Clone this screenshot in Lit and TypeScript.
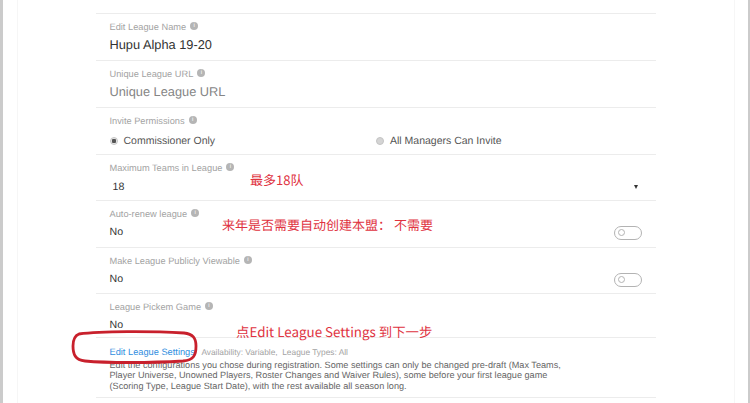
import { LitElement, html, css, nothing } from "lit";
import { customElement } from "lit/decorators.js";

const info = html`<span class="info">i</span>`;

@customElement("app-root")
export class AppRoot extends LitElement {
  static styles = css`
    :host { display: block; width: 750px; height: 403px; overflow: hidden; background: #fff; position: relative;
      font-family: "Liberation Sans", Arial, sans-serif; text-rendering: geometricPrecision; }
    .frame { box-sizing: border-box; height: 403px; display: flex; border-left: 3px solid #cbcbcb; border-right: 2px solid #cbcbcb; }
    .panel { box-sizing: border-box; flex: 1; margin: 0 13px 0 14px; border-left: 1px solid #f6f6f6; border-right: 1px solid #f6f6f6; padding: 13px 78px 0 78px; }
    .row { box-sizing: border-box; height: 47px; border-top: 1px solid #ececec; padding: 6px 0 0 13.5px; position: relative; }
    .row.h46 { height: 46px; }
    .row.h44 { height: 44px; }
    .label { font-size: 9.25px; line-height: 14px; color: #a3a3a3; display: flex; align-items: center; gap: 4px; height: 14px; }
    .info { width: 8px; height: 8px; border-radius: 50%; background: #b5b5b5; color: #fff; font-size: 6px; line-height: 8px; text-align: center; margin-top: -2px; }
    .value { font-size: 12.8px; line-height: 18px; margin-top: 2px; color: #333; }
    .value.ph { color: #858585; }
    .value.sm { font-size: 10.6px; margin-top: 4px; line-height: 16px; color: #333; padding-left: 3px; }
    .value.no { font-size: 10.6px; line-height: 16px; margin-top: 3px; }
    .radios { display: flex; margin-top: 4px; height: 18px; align-items: center; font-size: 10.5px; color: #555; }
    .radio { display: flex; align-items: center; gap: 6px; }
    .radio.first { width: 266.5px; }
    .dot { box-sizing: border-box; width: 8px; height: 8px; border-radius: 50%; background: #d4d4d4; border: 1px solid #c4c4c4; margin-top: -1px; }
    .dot.on { background: radial-gradient(circle, #555 0 2px, #e6e6e6 2.5px); }
    .caret { position: absolute; left: 538px; top: 30px; width: 0; height: 0; border-left: 2.5px solid transparent; border-right: 2.5px solid transparent; border-top: 4px solid #333; }
    .toggle { box-sizing: border-box; position: absolute; left: 518px; top: 25px; width: 28px; height: 14px; border: 1.5px solid #b3b3b3; border-radius: 7px; background: #fff; }
    .toggle::before { content: ""; box-sizing: border-box; position: absolute; left: 3px; top: 2px; width: 7px; height: 7px; border: 1.5px solid #b3b3b3; border-radius: 50%; }
    .settings { box-sizing: border-box; height: 61px; border-top: 1px solid #ececec; border-bottom: 1px solid #ececec; padding: 7px 0 0 13.5px; }
    .head { display: flex; align-items: baseline; gap: 6.5px; height: 14px; line-height: 14px; }
    .link { font-size: 9.25px; color: #2f8ee0; }
    .meta { font-size: 8.35px; color: #a3a3a3; white-space: pre; }
    .desc { font-size: 9.15px; line-height: 10.5px; color: #666; margin-top: 0.5px; white-space: nowrap; }
    .note { position: absolute; font-family: "Noto Sans CJK SC", "Noto Sans", sans-serif; font-size: 13px; line-height: 16px; color: #e0333f; white-space: nowrap; }
    .n1 { left: 250px; top: 172px; }
    .n2 { left: 222px; top: 217px; }
    .n3 { left: 236px; top: 323px; font-size: 13.4px; }
    .oval { position: absolute; left: 71px; top: 330px; width: 128px; height: 34px; overflow: visible; }
  `;

  private row(label: string, body: unknown, cls = "", extra: unknown = nothing) {
    return html`<div class="row ${cls}"><div class="label">${label} ${info}</div>${body}${extra}</div>`;
  }

  render() {
    const no = html`<div class="value no">No</div>`;
    const toggle = html`<div class="toggle"></div>`;
    return html`
      <div class="frame">
        <div class="panel">
          ${this.row("Edit League Name", html`<div class="value">Hupu Alpha 19-20</div>`)}
          ${this.row("Unique League URL", html`<div class="value ph">Unique League URL</div>`)}
          ${this.row("Invite Permissions", html`<div class="radios">
            <span class="radio first"><span class="dot on"></span>Commissioner Only</span>
            <span class="radio"><span class="dot"></span>All Managers Can Invite</span>
          </div>`)}
          ${this.row("Maximum Teams in League", html`<div class="value sm">18</div>`, "h46", html`<div class="caret"></div>`)}
          ${this.row("Auto-renew league", no, "", toggle)}
          ${this.row("Make League Publicly Viewable", no, "h46", toggle)}
          ${this.row("League Pickem Game", no, "h44")}
          <div class="settings">
            <div class="head"><span class="link">Edit League Settings</span><span class="meta">Availability: Variable,  League Types: All</span></div>
            <div class="desc">Edit the configurations you chose during registration. Some settings can only be changed pre-draft (Max Teams,<br>Player Universe, Unowned Players, Roster Changes and Waiver Rules), some before your first league game<br>(Scoring Type, League Start Date), with the rest available all season long.</div>
          </div>
        </div>
      </div>
      <span class="note n1">最多18队</span>
      <span class="note n2">来年是否需要自动创建本盟： 不需要</span>
      <span class="note n3">点Edit League Settings 到下一步</span>
      <svg class="oval" viewBox="0 0 128 34"><path d="M8 4 C30 1 80 1 113 3 C122 4 125 8 125 16 C125 25 123 30 112 31 C80 33 35 33 14 31 C4 30 2 24 2 16 C2 10 3 6 8 4 Z" fill="none" stroke="#c8202c" stroke-width="2.8"/></svg>
    `;
  }
}
